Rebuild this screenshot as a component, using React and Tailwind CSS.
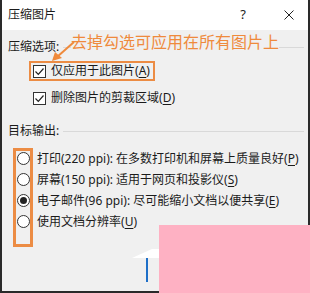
const ink = "text-[#1b1b1b]";

function Check() {
  return (
    <span className="w-[13px] h-[13px] border border-[#333] bg-white flex items-center justify-center shrink-0">
      <svg width="11" height="11" viewBox="0 0 11 11">
        <path d="M1.5 5.5 L4.3 8.3 L9.5 2.5" fill="none" stroke="#222" strokeWidth="1.2" />
      </svg>
    </span>
  );
}

function Radio({ on }) {
  return (
    <span className="w-[13px] h-[13px] rounded-full border border-[#333] bg-white flex items-center justify-center shrink-0">
      {on && <span className="w-[7px] h-[7px] rounded-full bg-[#222]" />}
    </span>
  );
}

function Key({ k }) {
  return (
    <>
      (<span className="underline underline-offset-2">{k}</span>)
    </>
  );
}

function Section({ label }) {
  return (
    <div className="h-[18px] flex items-center gap-1">
      <span className={`text-[12px] ${ink}`}>{label}</span>
      <span className="flex-1 h-px bg-[#d9d9d9]" />
    </div>
  );
}

const radios = [
  ["打印(220 ppi): 在多数打印机和屏幕上质量良好", "P", false],
  ["屏幕(150 ppi): 适用于网页和投影仪", "S", false],
  ["电子邮件(96 ppi): 尽可能缩小文档以便共享", "E", true],
  ["使用文档分辨率", "U", false],
];

export default function App() {
  return (
    <div
      className="w-[310px] h-[293px] relative overflow-hidden"
      style={{ fontFamily: '"Noto Sans", "Noto Sans CJK SC", sans-serif' }}
    >
      <div className="h-full bg-[#f0f0f0] border-l-2 border-r-2 border-b-2 border-[#2a2a2a]">
        <div className="h-[30px] bg-white flex items-center pl-[6px] pr-[14px]">
          <span className={`text-[12px] ${ink}`}>压缩图片</span>
          <span className={`ml-auto text-[13px] ${ink}`}>?</span>
          <svg className="ml-[38px]" width="10" height="10" viewBox="0 0 10 10">
            <path d="M0.5 0.5 L9.5 9.5 M9.5 0.5 L0.5 9.5" stroke="#222" strokeWidth="1" />
          </svg>
        </div>

        <div className="pl-[6px] pr-[4px] pt-[8px]">
          <Section label="压缩选项:" />
          <div className="mt-[5px] ml-[21px] h-[20px] w-[126px] border-2 border-[#ec8c44] flex items-center gap-[5px] pl-[2px]">
            <Check />
            <span className={`text-[12px] ${ink}`}>
              仅应用于此图片<Key k="A" />
            </span>
          </div>
          <div className="mt-[7px] ml-[25px] h-[20px] flex items-center gap-[5px]">
            <Check />
            <span className={`text-[12px] ${ink}`}>
              删除图片的剪裁区域<Key k="D" />
            </span>
          </div>

          <div className="mt-[14px]">
            <Section label="目标输出:" />
          </div>
          <div className="mt-[8px] flex flex-col">
            {radios.map(([t, k, on]) => (
              <div key={k} className="h-[21px] flex items-center gap-[7px] pl-[9px]">
                <Radio on={on} />
                <span className={`text-[12px] whitespace-nowrap ${ink}`}>
                  {t}
                  <Key k={k} />
                </span>
              </div>
            ))}
          </div>
        </div>
      </div>

      {/* radio highlight */}
      <div className="absolute left-[13px] top-[148px] w-[20px] h-[99px] border-[3px] border-[#ec8c44]" />

      {/* annotation */}
      <div className="absolute left-[71px] top-[31px] text-[16px] leading-[22px] text-[#ef8a3c] bg-[#f0f0f0]">
        去掉勾选可应用在所有图片上
      </div>
      <svg className="absolute left-[50px] top-[40px]" width="30" height="24" viewBox="0 0 30 24">
        <path d="M24 2 L7 17" stroke="#ef8a3c" strokeWidth="2" fill="none" />
        <path d="M2 21 L5 12 L12 18 Z" fill="#ef8a3c" />
      </svg>

      {/* partial button behind overlay */}
      <div className="absolute left-[146px] top-[257px] w-[20px] h-[25px] border-l-2 border-[#1e6fc8]" />
      <svg className="absolute left-[132px] top-[248px]" width="28" height="12" viewBox="0 0 28 12">
        <path d="M0 10 L20 1 L28 1 L28 10 Z" fill="#ffffff" />
      </svg>

      {/* pink overlay */}
      <div className="absolute z-10 left-[159px] top-[225px] w-[151px] h-[68px] bg-[#feb1c3]" />
    </div>
  );
}
